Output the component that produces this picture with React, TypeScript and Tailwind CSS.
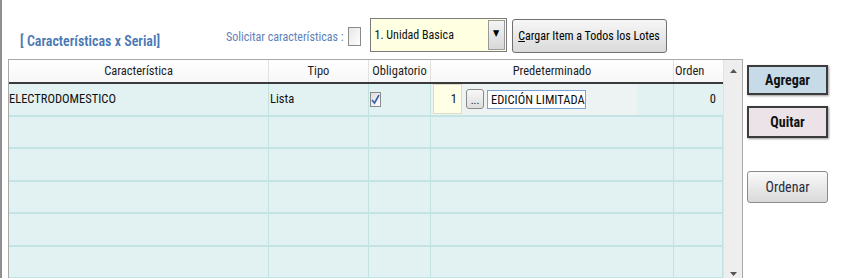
const cols = ['w-[260px]', 'w-[100px]', 'w-[62px]', 'w-[243px]', 'w-[49px]'];

function Header() {
  return (
    <div className="flex h-[24px] border-b-2 border-[#3a3a3a] bg-gradient-to-b from-white to-[#f7f7f7] text-[#1e1e1e]">
      <div className="w-[260px] flex items-center justify-center border-r border-[#e2e2e2]">Característica</div>
      <div className="w-[100px] flex items-center justify-center border-r border-[#e2e2e2]">Tipo</div>
      <div className="w-[62px] flex items-center justify-center border-r border-[#e2e2e2]">Obligatorio</div>
      <div className="w-[243px] flex items-center justify-center border-r border-[#e2e2e2]">Predeterminado</div>
      <div className="w-[49px] flex items-center pl-[1px]">Orden</div>
    </div>
  );
}

function EmptyRow() {
  return (
    <div className="flex h-[32.5px] border-b-2 border-[#c6e3e3]">
      {cols.map((w, i) => (
        <div key={i} className={`${w} border-r border-[#c3e2e2]`} />
      ))}
    </div>
  );
}

export default function App() {
  return (
    <div className="w-[864px] h-[278px] overflow-hidden bg-white border-l-2 border-[#8e8e93] pt-[18px] font-['Roboto_Condensed','DejaVu_Sans_Condensed',sans-serif] text-[12.5px] text-[#111]">
      {/* toolbar */}
      <div className="flex items-start h-[41px]">
        <div className="w-[224px] pl-[18px] mt-[14px] text-[14px] font-semibold text-[#4a78b4] leading-[18px]">
          [ Características x Serial]
        </div>
        <div className="mt-[11px] text-[12px] text-[#5f7fba] leading-[16px]">Solicitar características :</div>
        <div className="ml-[4px] mt-[9px] w-[13px] h-[19px] border border-[#8a8a8a] bg-gradient-to-br from-[#e6e6e6] to-white" />
        <div className="ml-[9px] flex w-[137px] h-[34px] border border-[#7a7a7a] bg-[#ffffe1]">
          <div className="flex-1 flex items-center pl-[4px] text-[12px]">1. Unidad Basica</div>
          <div className="w-[17px] my-[1px] mr-[1px] border border-[#9a9a9a] bg-gradient-to-b from-[#f4f4f4] to-[#d8d8d8] flex justify-center pt-[6px] text-[9px] leading-[12px] text-black">
            ▼
          </div>
        </div>
        <button className="ml-[5px] mt-[1px] w-[155px] h-[34px] rounded-[3px] border border-[#707070] bg-gradient-to-b from-[#f7f7f7] to-[#dadada] text-black text-[12px] leading-[16px] whitespace-nowrap">
          <span className="underline">C</span>argar Item a Todos los Lotes
        </button>
      </div>

      {/* grid + buttons */}
      <div className="flex items-start ml-[6px]">
        <div className="flex w-[735px] h-[221px] border-t border-x border-[#a9a9a9] overflow-hidden">
          <div className="w-[714px] flex flex-col">
            <Header />
            <div className="bg-[#e2f2f2] flex-1">
              <div className="flex h-[32.5px] border-b-2 border-[#c6e3e3]">
                <div className="w-[260px] border-r border-[#c3e2e2] flex items-center">ELECTRODOMESTICO</div>
                <div className="w-[100px] border-r border-[#c3e2e2] flex items-center pl-[1px]">Lista</div>
                <div className="w-[62px] border-r border-[#c3e2e2] flex items-center pl-[1px]">
                  <div className="w-[11px] h-[15px] border border-[#8a8a8a] bg-gradient-to-br from-[#dcdcdc] to-white flex items-center justify-center">
                    <svg width="9" height="11" viewBox="0 0 9 11">
                      <path d="M1 6 L3.5 9 L8 1" fill="none" stroke="#3a5fb0" strokeWidth="1.6" />
                    </svg>
                  </div>
                </div>
                <div className="w-[243px] border-r border-[#c3e2e2] flex">
                  <div className="w-[206px] bg-[#edf3f3] flex items-center pl-[2px]">
                    <div className="w-[29px] h-[30px] border border-[#dcdccc] bg-[#ffffe6] flex items-center justify-end pr-[4px]">1</div>
                    <div className="ml-[4px] w-[18px] h-[20px] rounded-[3px] border border-[#8a8a8a] bg-gradient-to-b from-[#f8f8f8] to-[#dedede] flex items-end justify-center text-[11px] leading-[12px] pb-[1px]">
                      ...
                    </div>
                    <div className="ml-[3px] w-[99px] h-[19px] border border-[#7ba4d6] bg-white overflow-hidden whitespace-nowrap pl-[3px] leading-[17px]">
                      EDICIÓN LIMITADA
                    </div>
                  </div>
                </div>
                <div className="w-[49px] flex items-center justify-end pr-[7px]">0</div>
              </div>
              <EmptyRow />
              <EmptyRow />
              <EmptyRow />
              <EmptyRow />
              <EmptyRow />
            </div>
          </div>
          {/* scrollbar */}
          <div className="w-[19px] bg-[#eeeeee] border-l border-[#e2e2e2] flex flex-col items-center justify-between pt-[9px]">
            <svg width="7" height="4" viewBox="0 0 7 4"><path d="M0 4 L3.5 0 L7 4 Z" fill="#555" /></svg>
            <svg width="7" height="4" viewBox="0 0 7 4" className="mb-[4px]"><path d="M0 0 L3.5 4 L7 0 Z" fill="#555" /></svg>
          </div>
        </div>

        <div className="ml-[4px] flex flex-col w-[81px]">
          <button className="mt-[6px] h-[30px] border-2 border-[#3c3c3c] bg-[#c6dbe7] shadow-[1px_1px_2px_#9a9a9a] font-bold text-[14px] text-[#111]">
            Agregar
          </button>
          <button className="mt-[11px] h-[32px] border-2 border-[#3c3c3c] bg-[#ebe3e7] shadow-[1px_1px_2px_#9a9a9a] font-bold text-[14px] text-[#111]">
            Quitar
          </button>
          <button className="mt-[33px] h-[32px] rounded-[3px] border border-[#8c8c8c] bg-gradient-to-b from-[#fafafa] to-[#d9d9d9] text-[14px] text-[#2a2a3a]">
            Ordenar
          </button>
        </div>
      </div>
    </div>
  );
}
